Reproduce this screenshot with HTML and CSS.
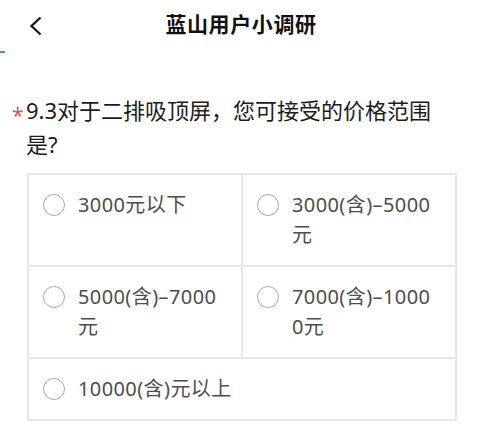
FILE: index.html
```html
<!DOCTYPE html>
<html lang="zh-CN">
<head>
<meta charset="utf-8">
<title>蓝山用户小调研</title>
<link rel="stylesheet" href="styles.css">
</head>
<body>
<header class="topbar">
  <span class="back"><svg width="14" height="20" viewBox="0 0 14 20"><path d="M11.5 1.5 L2.5 10 L11.5 18.5" fill="none" stroke="#111" stroke-width="2.2" stroke-linejoin="miter"/></svg></span>
  <h1 class="title">蓝山用户小调研</h1>
</header>
<div class="tab-mark"></div>
<section class="question">
  <div class="q-title"><span class="req">*</span><span class="q-text">9.3对于二排吸顶屏，您可接受的价格范围是?</span></div>
  <div class="options">
    <label class="opt"><span class="radio"></span><span class="opt-text">3000元以下</span></label>
    <label class="opt"><span class="radio"></span><span class="opt-text">3000(含)–5000元</span></label>
    <label class="opt"><span class="radio"></span><span class="opt-text">5000(含)–7000元</span></label>
    <label class="opt"><span class="radio"></span><span class="opt-text">7000(含)–10000元</span></label>
    <label class="opt opt-wide"><span class="radio"></span><span class="opt-text">10000(含)元以上</span></label>
  </div>
</section>
</body>
</html>
```
FILE: styles.css
```css
html, body {
  margin: 0;
  padding: 0;
  background: #fff;
}
body {
  font-family: "Noto Sans", "Noto Sans CJK SC", sans-serif;
  width: 480px;
  height: 439px;
  overflow: hidden;
}
.topbar {
  height: 46px;
  display: flex;
  align-items: center;
  justify-content: center;
  position: relative;
}
.back {
  position: absolute;
  left: 29px;
  top: 16px;
  display: block;
  line-height: 0;
}
.title {
  margin: 0;
  font-size: 21px;
  font-weight: 700;
  color: #111;
  letter-spacing: 0.6px;
  padding-left: 2px;
}
.tab-mark {
  width: 5px;
  height: 2px;
  background: #4a8ee8;
  margin-top: 5px;
}
.question {
  padding-top: 40px;
}
.q-title {
  display: flex;
  padding-left: 12px;
  padding-right: 38px;
  font-size: 22px;
  line-height: 34px;
  color: #1c1c1c;
}
.req {
  flex: 0 0 14px;
  color: #e8514a;
  font-size: 21px;
  line-height: 34px;
  padding-top: 5px;
  height: 29px;
}
.q-text {
  flex: 1;
}
.options {
  margin: 12px 23px 0 27px;
  display: grid;
  grid-template-columns: 1fr 1fr;
  gap: 2px;
  border: 2px solid #e8e8e8;
  background: #e8e8e8;
}
.opt {
  background: #fff;
  display: flex;
  align-items: flex-start;
  padding: 15px 12px 15px 14px;
  font-size: 20px;
  line-height: 30px;
  color: #4d4d4d;
}
.opt-wide {
  grid-column: 1 / 3;
}
.radio {
  flex: 0 0 auto;
  width: 20px;
  height: 20px;
  border: 1.5px solid #aaa;
  border-radius: 50%;
  margin-top: 3.5px;
  margin-right: 13px;
}
.opt-text {
  word-break: break-all;
  letter-spacing: 0.4px;
  max-width: 144px;
}
.opt-wide .opt-text {
  max-width: none;
}
```
